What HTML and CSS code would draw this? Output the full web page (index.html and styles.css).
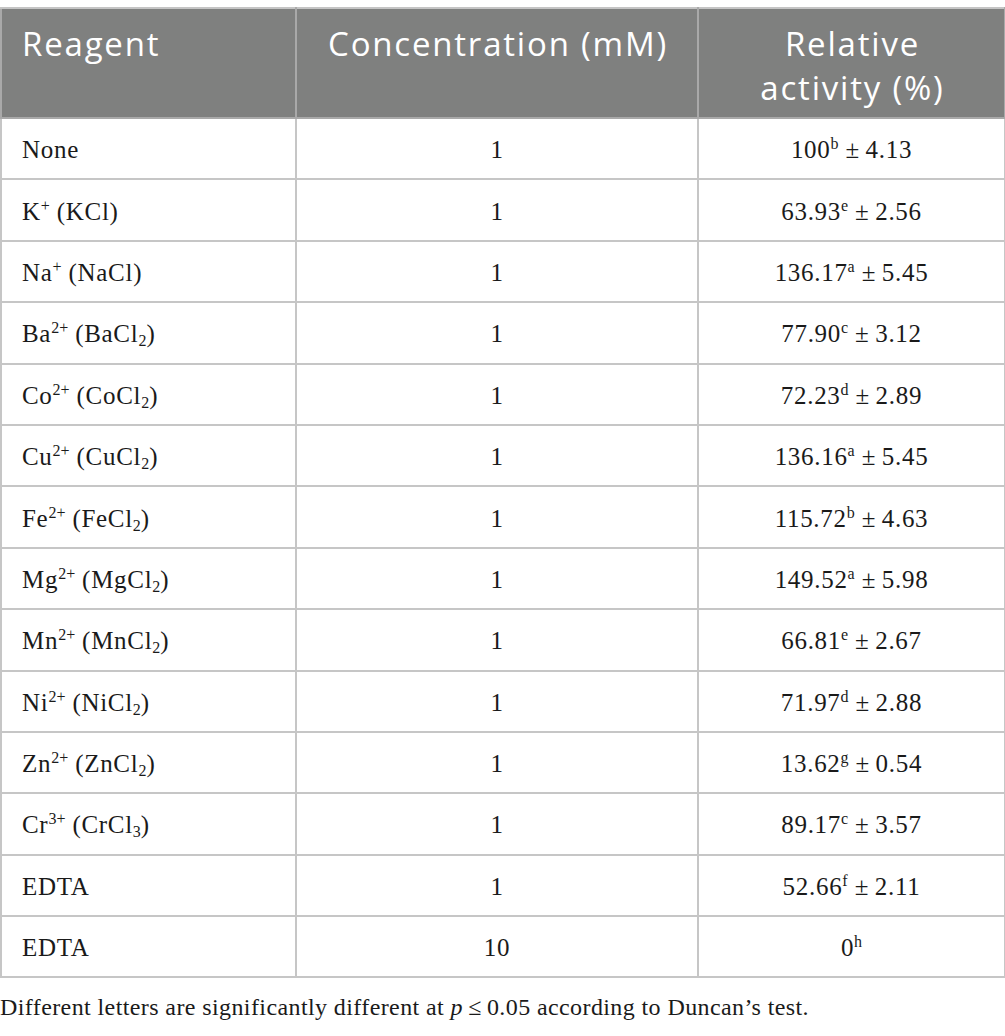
FILE: index.html
```html
<!DOCTYPE html>
<html lang="en">
<head>
    <meta charset="UTF-8">
    <meta name="viewport" content="width=device-width, initial-scale=1.0">
    <title>Effect of metal ions on relative activity</title>
    <link rel="stylesheet" href="styles.css">
</head>
<body>
    <table class="data-table">
        <colgroup>
            <col class="col-reagent">
            <col class="col-conc">
            <col class="col-activity">
        </colgroup>
        <thead>
            <tr>
                <th class="left">Reagent</th>
                <th>Concentration (mM)</th>
                <th>Relative<br>activity (%)</th>
            </tr>
        </thead>
        <tbody>
            <tr><td class="left">None</td><td>1</td><td>100<sup>b</sup> ±&#8201;4.13</td></tr>
            <tr><td class="left">K<sup>+</sup> (KCl)</td><td>1</td><td>63.93<sup>e</sup> ±&#8201;2.56</td></tr>
            <tr><td class="left">Na<sup>+</sup> (NaCl)</td><td>1</td><td>136.17<sup>a</sup> ±&#8201;5.45</td></tr>
            <tr><td class="left">Ba<sup>2+</sup> (BaCl<sub>2</sub>)</td><td>1</td><td>77.90<sup>c</sup> ±&#8201;3.12</td></tr>
            <tr><td class="left">Co<sup>2+</sup> (CoCl<sub>2</sub>)</td><td>1</td><td>72.23<sup>d</sup> ±&#8201;2.89</td></tr>
            <tr><td class="left">Cu<sup>2+</sup> (CuCl<sub>2</sub>)</td><td>1</td><td>136.16<sup>a</sup> ±&#8201;5.45</td></tr>
            <tr><td class="left">Fe<sup>2+</sup> (FeCl<sub>2</sub>)</td><td>1</td><td>115.72<sup>b</sup> ±&#8201;4.63</td></tr>
            <tr><td class="left">Mg<sup>2+</sup> (MgCl<sub>2</sub>)</td><td>1</td><td>149.52<sup>a</sup> ±&#8201;5.98</td></tr>
            <tr><td class="left">Mn<sup>2+</sup> (MnCl<sub>2</sub>)</td><td>1</td><td>66.81<sup>e</sup> ±&#8201;2.67</td></tr>
            <tr><td class="left">Ni<sup>2+</sup> (NiCl<sub>2</sub>)</td><td>1</td><td>71.97<sup>d</sup> ±&#8201;2.88</td></tr>
            <tr><td class="left">Zn<sup>2+</sup> (ZnCl<sub>2</sub>)</td><td>1</td><td>13.62<sup>g</sup> ±&#8201;0.54</td></tr>
            <tr><td class="left">Cr<sup>3+</sup> (CrCl<sub>3</sub>)</td><td>1</td><td>89.17<sup>c</sup> ±&#8201;3.57</td></tr>
            <tr><td class="left">EDTA</td><td>1</td><td>52.66<sup>f</sup> ±&#8201;2.11</td></tr>
            <tr><td class="left">EDTA</td><td>10</td><td>0<sup>h</sup></td></tr>
        </tbody>
    </table>
    <p class="note">Different letters are significantly different at <i>p</i>&#8201;≤&#8201;0.05 according to Duncan’s test.</p>
</body>
</html>
```

FILE: styles.css
```css
body {
    margin: 0;
    padding-top: 7px;
    background: white;
    font-family: "Liberation Serif", "Times New Roman", serif;
    color: #1a1a1a;
}
.data-table {
    width: 1004px;
    border-collapse: collapse;
    table-layout: fixed;
}
.col-reagent {
    width: 295px;
}
.col-conc {
    width: 402px;
}
.col-activity {
    width: 307px;
}
th {
    background-color: #7f807f;
    color: white;
    font-family: "Open Sans", "Noto Sans", sans-serif;
    font-weight: 400;
    font-size: 33px;
    letter-spacing: 1.8px;
    line-height: 44px;
    text-align: center;
    vertical-align: top;
    height: 110px;
    box-sizing: border-box;
    padding: 13px 18px 0 20px;
    border: 2px solid #a9a9a9;
    border-top-color: #c4c4c4;
}
td {
    font-size: 25px;
    letter-spacing: 0.7px;
    height: 61.4px;
    box-sizing: border-box;
    padding: 3px 20px 0;
    text-align: center;
    vertical-align: middle;
    border: 2px solid #c6c6c6;
}
.left {
    text-align: left;
}
sup, sub {
    font-size: 0.64em;
    line-height: 0;
    letter-spacing: 0;
}
sup {
    vertical-align: 0.55em;
}
sub {
    vertical-align: -0.25em;
}
.note {
    margin: 16px 0 0;
    font-size: 24px;
    letter-spacing: 0.4px;
}
```
